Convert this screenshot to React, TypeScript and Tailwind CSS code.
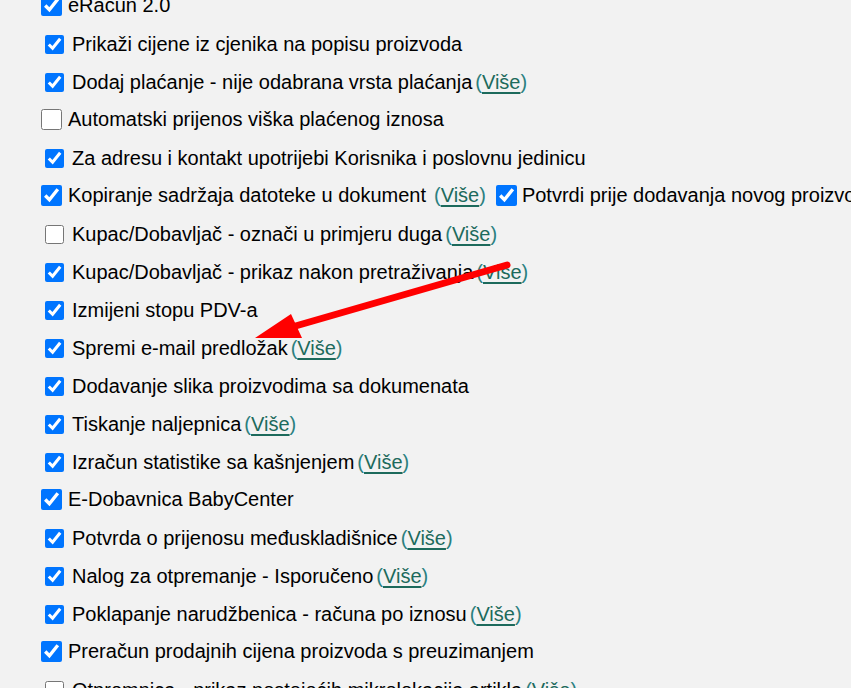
import React from "react";

type Item = {
  label: string;
  big?: boolean; // larger checkbox, no left margin
  checked?: boolean;
  more?: boolean;
  moreGap?: string;
  extra?: { label: string };
};

const items: Item[] = [
  { label: "eRačun 2.0", big: true, checked: true },
  { label: "Prikaži cijene iz cjenika na popisu proizvoda", checked: true },
  { label: "Dodaj plaćanje - nije odabrana vrsta plaćanja", checked: true, more: true },
  { label: "Automatski prijenos viška plaćenog iznosa", big: true },
  { label: "Za adresu i kontakt upotrijebi Korisnika i poslovnu jedinicu", checked: true },
  {
    label: "Kopiranje sadržaja datoteke u dokument",
    big: true,
    checked: true,
    more: true,
    moreGap: "ml-[8px]",
    extra: { label: "Potvrdi prije dodavanja novog proizvoda" },
  },
  { label: "Kupac/Dobavljač - označi u primjeru duga", more: true },
  { label: "Kupac/Dobavljač - prikaz nakon pretraživanja", checked: true, more: true },
  { label: "Izmijeni stopu PDV-a", checked: true },
  { label: "Spremi e-mail predložak", checked: true, more: true },
  { label: "Dodavanje slika proizvodima sa dokumenata", checked: true },
  { label: "Tiskanje naljepnica", checked: true, more: true },
  { label: "Izračun statistike sa kašnjenjem", checked: true, more: true },
  { label: "E-Dobavnica BabyCenter", big: true, checked: true },
  { label: "Potvrda o prijenosu međuskladišnice", checked: true, more: true },
  { label: "Nalog za otpremanje - Isporučeno", checked: true, more: true },
  { label: "Poklapanje narudžbenica - računa po iznosu", checked: true, more: true },
  { label: "Preračun prodajnih cijena proizvoda s preuzimanjem", big: true, checked: true },
  { label: "Otpremnica - prikaz postojećih mikrolokacija artikla", more: true },
];

function Box({ big, checked }: { big?: boolean; checked?: boolean }) {
  return big ? (
    <input type="checkbox" defaultChecked={checked} className="w-[21px] h-[21px] mr-[6px] shrink-0" />
  ) : (
    <input type="checkbox" defaultChecked={checked} className="w-[19px] h-[19px] ml-[4px] mr-[8px] shrink-0" />
  );
}

function More({ gap = "ml-[3px]" }: { gap?: string }) {
  return (
    <span className={`${gap} text-[#2b8080]`}>
      (<a href="#" className="text-[#1d6a5c] underline underline-offset-[3px]">Više</a>)
    </span>
  );
}

export default function App() {
  return (
    <div
      className="relative w-[851px] h-[688px] overflow-hidden bg-[#f2f2f2] text-black text-[20px] leading-[23px]"
      style={{ fontFamily: '"Liberation Sans", Arial, sans-serif' }}
    >
      <div className="mt-[-14px] pl-[41px]">
        {items.map((it, i) => (
          <div key={i} className={`flex items-center whitespace-nowrap ${it.big ? "h-[38px] -mt-px mb-px" : "h-[38px]"}`}>
            <Box big={it.big} checked={it.checked} />
            <span>{it.label}</span>
            {it.more && <More gap={it.moreGap} />}
            {it.extra && (
              <>
                <input type="checkbox" defaultChecked className="w-[21px] h-[21px] ml-[10px] mr-[5px] shrink-0" />
                <span>{it.extra.label}</span>
              </>
            )}
          </div>
        ))}
      </div>

      {/* red annotation arrow */}
      <svg className="absolute inset-0 pointer-events-none" width="851" height="688" viewBox="0 0 851 688">
        <line x1="507" y1="265" x2="292" y2="327" stroke="#ff0000" strokeWidth="7" strokeLinecap="round" />
        <polygon points="255,338 291,314 302,338" fill="#ff0000" />
      </svg>
    </div>
  );
}
